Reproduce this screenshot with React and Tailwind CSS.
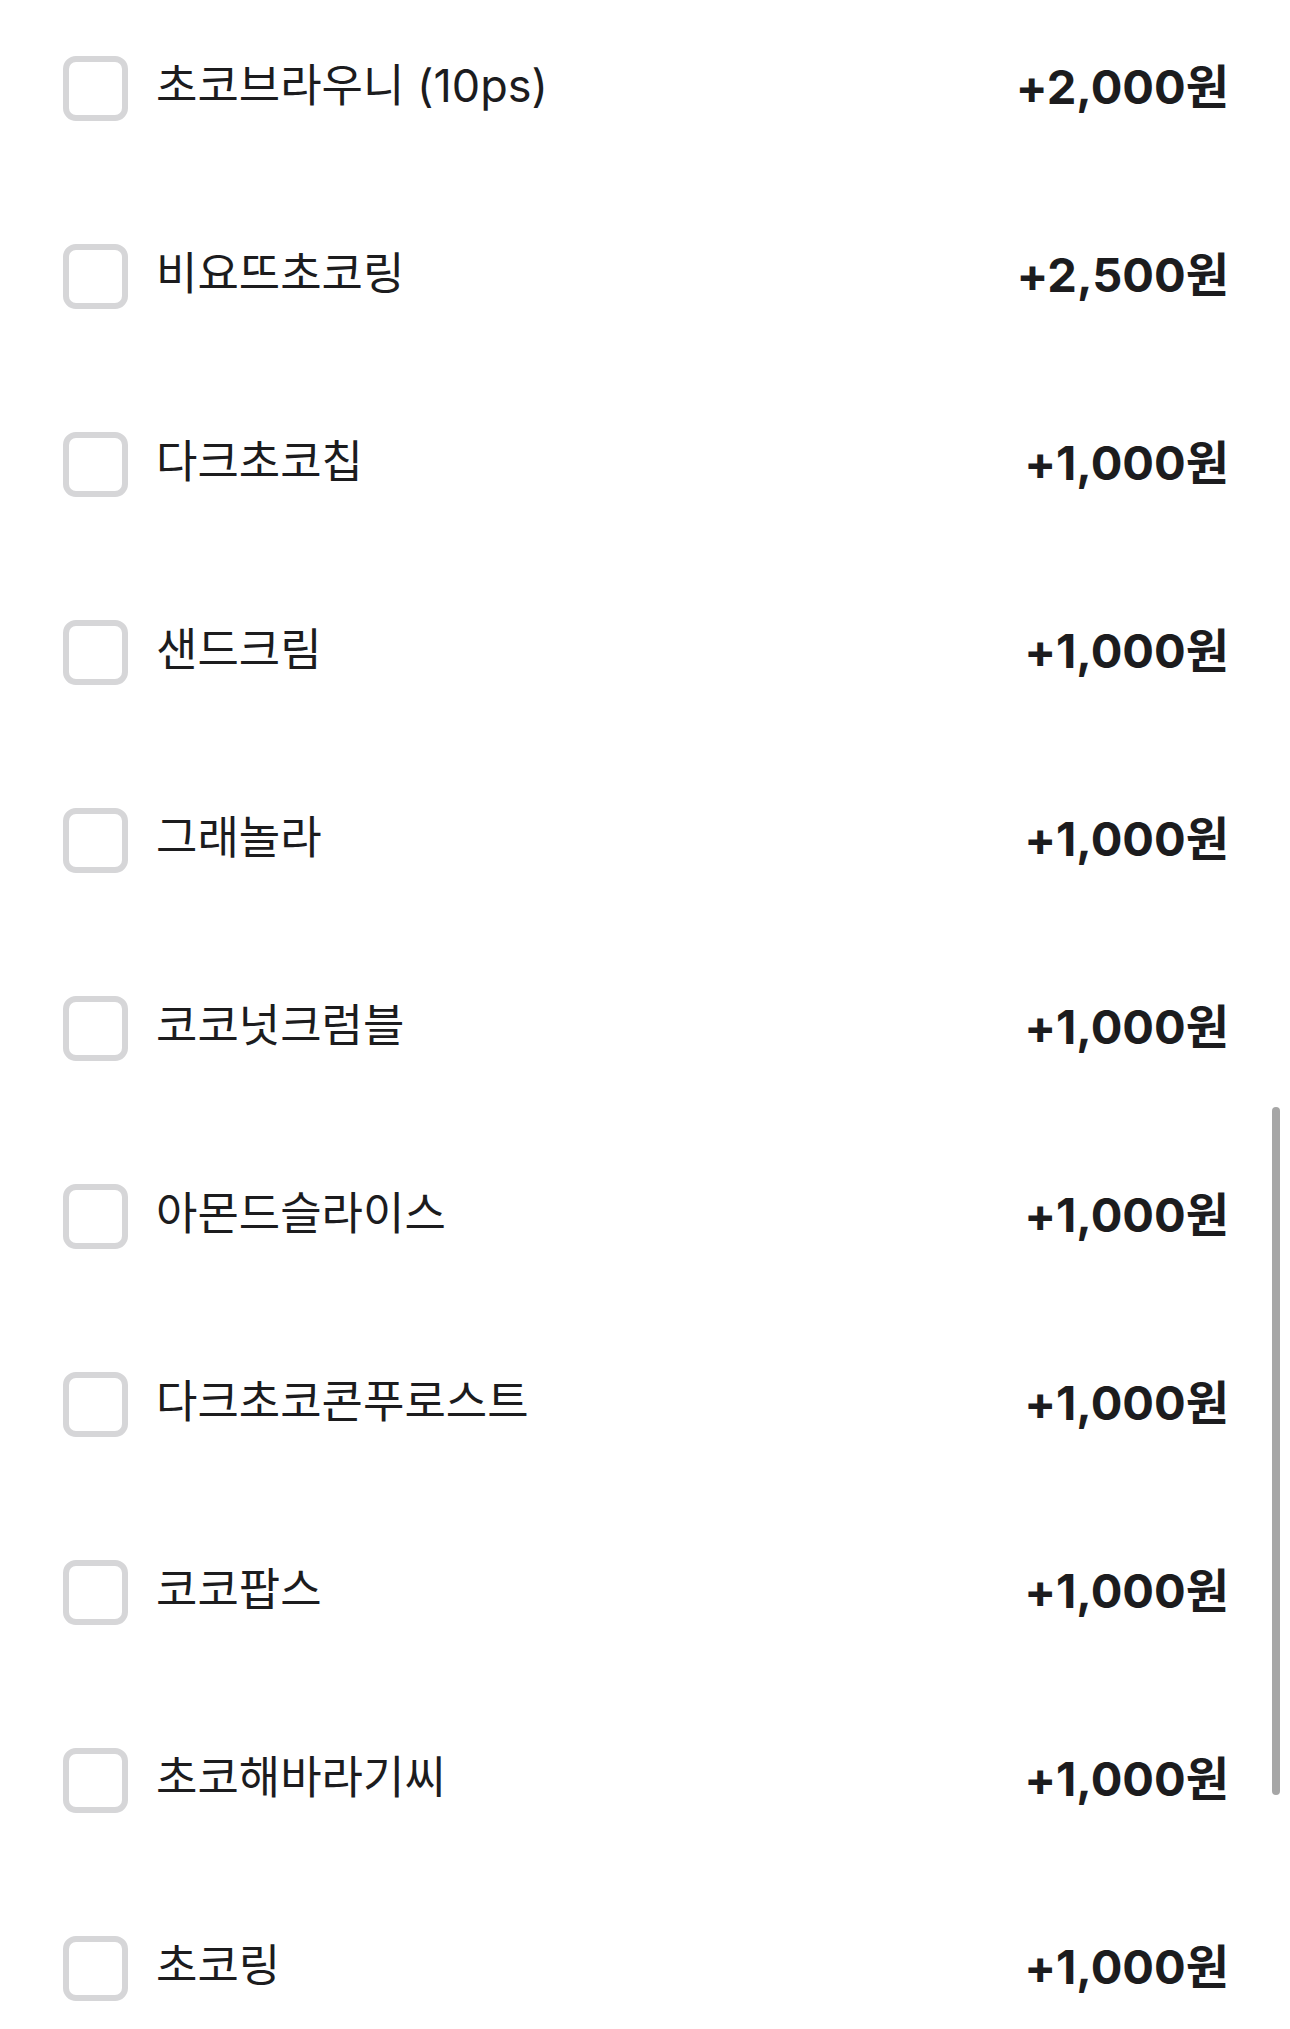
import { useState } from "react";

const options = [
  { name: "초코브라우니 (10ps)", price: 2000 },
  { name: "비요뜨초코링", price: 2500 },
  { name: "다크초코칩", price: 1000 },
  { name: "샌드크림", price: 1000 },
  { name: "그래놀라", price: 1000 },
  { name: "코코넛크럼블", price: 1000 },
  { name: "아몬드슬라이스", price: 1000 },
  { name: "다크초코콘푸로스트", price: 1000 },
  { name: "코코팝스", price: 1000 },
  { name: "초코해바라기씨", price: 1000 },
  { name: "초코링", price: 1000 },
];

const font = { fontFamily: 'Inter, "Noto Sans CJK KR", sans-serif' };

export default function App() {
  const [checked, setChecked] = useState({});

  const toggle = (i) => setChecked((prev) => ({ ...prev, [i]: !prev[i] }));

  return (
    <div className="relative min-h-[2029px] w-full overflow-hidden bg-white text-[#1c1c1e]" style={font}>
      <ul className="-mt-[6px] flex flex-col pl-[63px] pr-[61px]">
        {options.map((item, i) => (
          <li key={item.name} className="flex h-[188px] items-center" onClick={() => toggle(i)}>
            <span
              className={
                "h-[65px] w-[65px] shrink-0 rounded-[13px] border-[6px] " +
                (checked[i] ? "border-[#ff6b3d] bg-[#ff6b3d]" : "border-[#d6d6d8] bg-white")
              }
            />
            <span className="ml-[28px] flex-1 pb-[6px] text-[45px] leading-none">{item.name}</span>
            <span className="pb-[4px] text-[47px] font-bold leading-none">+{item.price.toLocaleString("en-US")}원</span>
          </li>
        ))}
      </ul>
      <div className="absolute left-[1272px] top-[1107px] h-[688px] w-[8px] rounded-full bg-[#a6a6a6]" />
    </div>
  );
}
